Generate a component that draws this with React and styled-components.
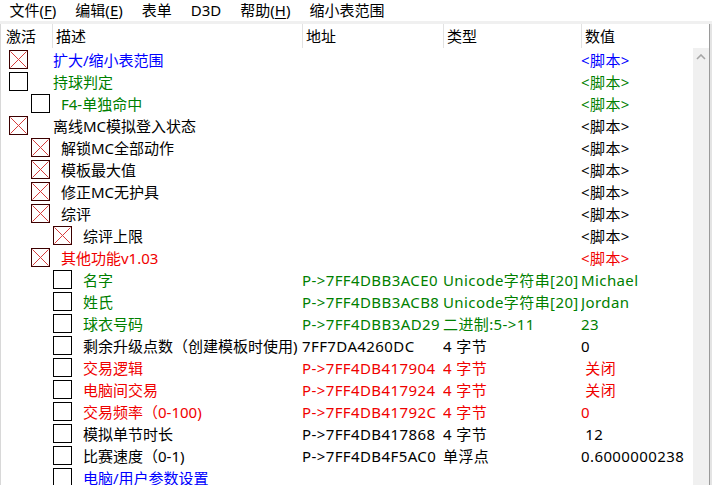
import React from "react";
import styled, { createGlobalStyle } from "styled-components";

const Global = createGlobalStyle`
  html, body { margin: 0; padding: 0; background: #fff; }
  body {
    font-family: "Noto Sans", "Noto Sans CJK SC", sans-serif;
    font-size: 15px;
    color: #000;
    width: 712px;
    height: 485px;
    overflow: hidden;
  }
`;

const Window = styled.div`
  width: 712px;
  height: 485px;
  display: flex;
  flex-direction: column;
  overflow: hidden;
  background: #fff;
`;

const MenuBar = styled.div`
  height: 21px;
  display: flex;
  align-items: center;
  background: #fff;
`;

const MenuItem = styled.div`
  padding: 0 9.5px;
  line-height: 21px;
  white-space: pre;
  u { text-decoration: underline; text-underline-offset: 2px; }
`;

const Band = styled.div`
  height: 3px;
  background: #f0f0f0;
`;

const Frame = styled.div`
  flex: 1;
  display: flex;
  min-height: 0;
`;

const ListArea = styled.div`
  width: 708px;
  border-left: 1px solid #d8d8d8;
  display: flex;
  flex-direction: column;
  min-height: 0;
`;

const RightEdge = styled.div`
  width: 1px;
  background: #9a9a9a;
`;

const RightShade = styled.div`
  width: 2px;
  background: #e4e4e4;
`;

const Header = styled.div`
  height: 24px;
  display: grid;
  grid-template-columns: 51px 250px 141px 138px 1fr;
  background: #fff;
`;

const HeadCell = styled.div`
  line-height: 24px;
  padding-left: ${(p) => (p.$first ? "5px" : "3px")};
  border-left: ${(p) => (p.$first ? "none" : "1px solid #e2e2e2")};
  white-space: nowrap;
`;

const Body = styled.div`
  flex: 1;
  display: flex;
  min-height: 0;
`;

const Rows = styled.div`
  flex: 1;
  overflow: hidden;
`;

const Row = styled.div`
  height: 22px;
  display: grid;
  grid-template-columns: 301px 141px 138px 1fr;
  color: ${(p) => p.$color};
`;

const TreeCell = styled.div`
  display: flex;
  align-items: flex-start;
  padding-left: ${(p) => 8 + p.$level * 22}px;
  overflow: hidden;
  white-space: nowrap;
`;

const Box = styled.div`
  flex: none;
  width: 19px;
  height: 19px;
  margin-top: 2px;
  box-sizing: border-box;
  border: 1px solid ${(p) => (p.$checked ? "#3a0000" : "#000")};
  background: #fff;
  display: flex;
  svg { display: block; }
`;

const Desc = styled.span`
  margin-left: ${(p) => (p.$level === 0 ? 25 : 11)}px;
  line-height: 24px;
  white-space: pre;
`;

const DataCell = styled.div`
  line-height: 24px;
  white-space: pre;
  overflow: hidden;
  letter-spacing: 0.4px;
`;

const ScrollBar = styled.div`
  width: 16px;
  background: #f0f0f0;
  display: flex;
  justify-content: center;
  padding-top: 6px;
  box-sizing: border-box;
`;

const C = { blue: "#0000ff", green: "#008000", red: "#f00000", black: "#000" };

const rows = [
  { l: 0, c: true, col: C.blue, d: "扩大/缩小表范围", v: "<脚本>" },
  { l: 0, c: false, col: C.green, d: "持球判定", v: "<脚本>" },
  { l: 1, c: false, col: C.green, d: "F4-单独命中", v: "<脚本>" },
  { l: 0, c: true, col: C.black, d: "离线MC模拟登入状态", v: "<脚本>" },
  { l: 1, c: true, col: C.black, d: "解锁MC全部动作", v: "<脚本>" },
  { l: 1, c: true, col: C.black, d: "模板最大值", v: "<脚本>" },
  { l: 1, c: true, col: C.black, d: "修正MC无护具", v: "<脚本>" },
  { l: 1, c: true, col: C.black, d: "综评", v: "<脚本>" },
  { l: 2, c: true, col: C.black, d: "综评上限", v: "<脚本>" },
  { l: 1, c: true, col: C.red, d: "其他功能v1.03", v: "<脚本>" },
  { l: 2, c: false, col: C.green, d: "名字", a: "P->7FF4DBB3ACE0", t: "Unicode字符串[20]", v: "Michael" },
  { l: 2, c: false, col: C.green, d: "姓氏", a: "P->7FF4DBB3ACB8", t: "Unicode字符串[20]", v: "Jordan" },
  { l: 2, c: false, col: C.green, d: "球衣号码", a: "P->7FF4DBB3AD29", t: "二进制:5->11", v: "23" },
  { l: 2, c: false, col: C.black, d: "剩余升级点数（创建模板时使用)", a: "7FF7DA4260DC", t: "4 字节", v: "0" },
  { l: 2, c: false, col: C.red, d: "交易逻辑", a: "P->7FF4DB417904", t: "4 字节", v: " 关闭" },
  { l: 2, c: false, col: C.red, d: "电脑间交易", a: "P->7FF4DB417924", t: "4 字节", v: " 关闭" },
  { l: 2, c: false, col: C.red, d: "交易频率（0-100)", a: "P->7FF4DB41792C", t: "4 字节", v: "0" },
  { l: 2, c: false, col: C.black, d: "模拟单节时长", a: "P->7FF4DB417868", t: "4 字节", v: " 12" },
  { l: 2, c: false, col: C.black, d: "比赛速度（0-1)", a: "P->7FF4DB4F5AC0", t: "单浮点", v: "0.6000000238" },
  { l: 2, c: false, col: C.blue, d: "电脑/用户参数设置", v: "" },
];

function Check({ checked }) {
  return (
    <Box $checked={checked}>
      {checked && (
        <svg width="17" height="17" viewBox="0 0 17 17">
          <path d="M0.5 0.5 L16.5 16.5 M16.5 0.5 L0.5 16.5" stroke="#d83c3c" strokeWidth="1" fill="none" />
        </svg>
      )}
    </Box>
  );
}

function Menu({ label, hot }) {
  return (
    <MenuItem>
      {label}
      {hot && (
        <>
          (<u>{hot}</u>)
        </>
      )}
    </MenuItem>
  );
}

export default function App() {
  return (
    <Window>
      <Global />
      <MenuBar>
        <Menu label="文件" hot="F" />
        <Menu label="编辑" hot="E" />
        <Menu label="表单" />
        <Menu label="D3D" />
        <Menu label="帮助" hot="H" />
        <Menu label="缩小表范围" />
      </MenuBar>
      <Band />
      <Frame>
        <ListArea>
          <Header>
            <HeadCell $first>激活</HeadCell>
            <HeadCell>描述</HeadCell>
            <HeadCell>地址</HeadCell>
            <HeadCell>类型</HeadCell>
            <HeadCell>数值</HeadCell>
          </Header>
          <Body>
            <Rows>
              {rows.map((r, i) => (
                <Row key={i} $color={r.col}>
                  <TreeCell $level={r.l}>
                    <Check checked={r.c} />
                    <Desc $level={r.l}>{r.d}</Desc>
                  </TreeCell>
                  <DataCell>{r.a || ""}</DataCell>
                  <DataCell>{r.t || ""}</DataCell>
                  <DataCell>{r.v}</DataCell>
                </Row>
              ))}
            </Rows>
            <ScrollBar>
              <svg width="10" height="6" viewBox="0 0 10 6">
                <path d="M1 5 L5 1 L9 5" stroke="#a6a6a6" strokeWidth="1.6" fill="none" />
              </svg>
            </ScrollBar>
          </Body>
        </ListArea>
        <RightEdge />
        <RightShade />
      </Frame>
    </Window>
  );
}
